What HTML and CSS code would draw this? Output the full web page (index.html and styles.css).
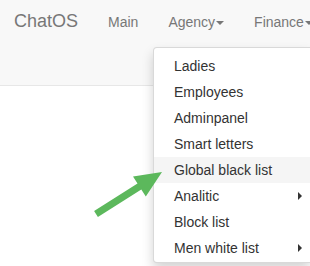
FILE: index.html
```html
<!DOCTYPE html>
<html lang="en">
<head>
  <meta charset="UTF-8">
  <title>ChatOS</title>
  <link rel="stylesheet" href="styles.css">
</head>
<body>

  <nav class="navbar">
    <a class="brand" href="#">ChatOS</a>
    <a class="nav-link" href="#">Main</a>
    <a class="nav-link" href="#">Agency<span class="caret"></span></a>
    <a class="nav-link" href="#">Finance<span class="caret"></span></a>
  </nav>

  <!-- открытое меню Agency -->
  <ul class="dropdown">
    <li><a href="#">Ladies</a></li>
    <li><a href="#">Employees</a></li>
    <li><a href="#">Adminpanel</a></li>
    <li><a href="#">Smart letters</a></li>
    <li class="active"><a href="#">Global black list</a></li>
    <li class="submenu"><a href="#">Analitic</a></li>
    <li><a href="#">Block list</a></li>
    <li class="submenu"><a href="#">Men white list</a></li>
  </ul>

  <svg class="pointer" width="80" height="60" viewBox="90 165 80 60">
    <polygon points="94.1,211.1 137.5,183.5 133,176.4 162,172 145.8,196.4 141.3,189.4 97.9,217" fill="#5cb85c"/>
  </svg>

</body>
</html>
```

FILE: styles.css
```css
* {
  margin: 0;
  padding: 0;
  box-sizing: border-box;
}

body, html {
  font-family: "Liberation Sans", Arial, sans-serif;
  font-size: 14px;
  background-color: #ffffff;
  overflow: hidden;
}

a {
  text-decoration: none;
}

.navbar {
  display: flex;
  align-items: baseline;
  height: 86px;
  padding-top: 11px;
  background-color: #f8f8f8;
  border-bottom: 1px solid #e7e7e7;
  white-space: nowrap;
  overflow: hidden;
}

.brand {
  font-size: 18px;
  line-height: 20px;
  color: #777;
  padding: 0 15px 0 14px;
}

.nav-link {
  color: #777;
  line-height: 20px;
  padding: 0 15px;
}

.caret {
  display: inline-block;
  margin-left: 1px;
  vertical-align: middle;
  border-top: 4px solid #777;
  border-left: 4px solid transparent;
  border-right: 4px solid transparent;
}

.dropdown {
  position: absolute;
  left: 153px;
  top: 47px;
  width: 157px;
  list-style: none;
  padding: 5px 0 1px;
  background: #ffffff;
  border: 1px solid rgba(0, 0, 0, 0.15);
  border-right: none;
  border-radius: 4px 0 0 4px;
  box-shadow: 0 6px 12px rgba(0, 0, 0, 0.175);
}

.dropdown a {
  display: block;
  padding: 3px 20px;
  line-height: 20px;
  color: #333;
  white-space: nowrap;
}

.dropdown .active a {
  background-color: #f5f5f5;
}

.submenu a {
  position: relative;
}

.submenu a::after {
  content: "";
  position: absolute;
  left: 144px;
  top: 9px;
  border-left: 4px solid #333;
  border-top: 4px solid transparent;
  border-bottom: 4px solid transparent;
}

.pointer {
  position: absolute;
  left: 90px;
  top: 165px;
}
```
